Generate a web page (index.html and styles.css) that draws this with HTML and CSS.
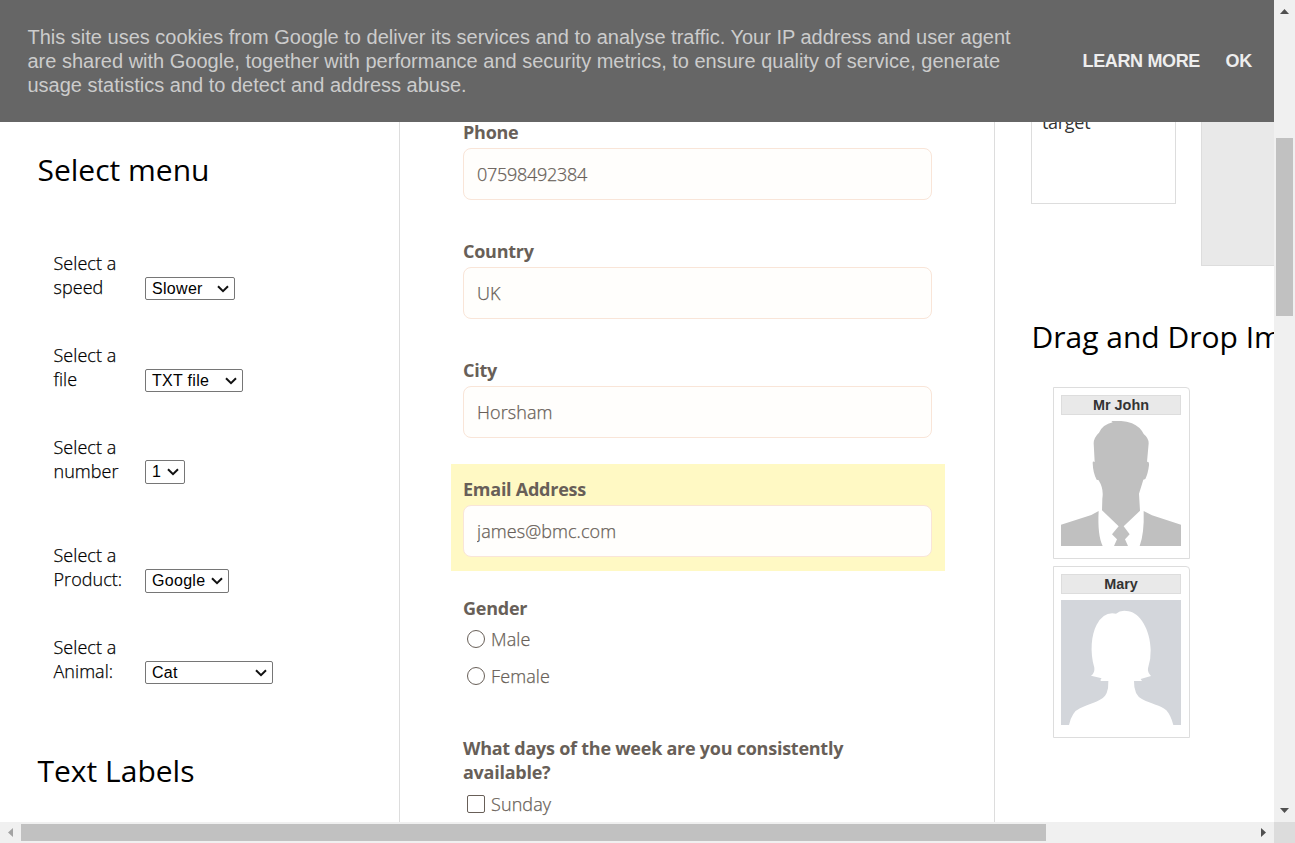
FILE: index.html
```html
<!DOCTYPE html>
<html lang="en">
<head>
<meta charset="utf-8">
<title>Test page</title>
<link rel="stylesheet" href="styles.css">
</head>
<body>
<div class="window">
  <div class="view">
    <header class="cookies">
      <p class="cookies-text">This site uses cookies from Google to deliver its services and to analyse traffic. Your IP address and user agent are shared with Google, together with performance and security metrics, to ensure quality of service, generate usage statistics and to detect and address abuse.</p>
      <a class="cookies-link">LEARN MORE</a>
      <a class="cookies-link">OK</a>
    </header>
    <main class="columns">
      <section class="menus">
        <h2 class="title">Select menu</h2>
        <div class="menu-list">
          <div class="menu-row"><span class="menu-label">Select a speed</span><div class="select w-speed">Slower<svg class="chevron" viewBox="0 0 12 8"><path d="M1 1.300L6 6.200L11 1.300"/></svg></div></div>
          <div class="menu-row"><span class="menu-label">Select a file</span><div class="select w-file">TXT file<svg class="chevron" viewBox="0 0 12 8"><path d="M1 1.300L6 6.200L11 1.300"/></svg></div></div>
          <div class="menu-row menu-row-third"><span class="menu-label">Select a number</span><div class="select select-tall w-number">1<svg class="chevron" viewBox="0 0 12 8"><path d="M1 1.300L6 6.200L11 1.300"/></svg></div></div>
          <div class="menu-row"><span class="menu-label">Select a Product:</span><div class="select select-tall select-low w-product">Google<svg class="chevron" viewBox="0 0 12 8"><path d="M1 1.300L6 6.200L11 1.300"/></svg></div></div>
          <div class="menu-row"><span class="menu-label">Select a Animal:</span><div class="select w-animal">Cat<svg class="chevron" viewBox="0 0 12 8"><path d="M1 1.300L6 6.200L11 1.300"/></svg></div></div>
        </div>
        <h2 class="title">Text Labels</h2>
      </section>
      <section class="form-column">
        <form class="form">
          <div class="field"><label class="field-label">Phone</label><input class="input input-number" value="07598492384"></div>
          <div class="field"><label class="field-label">Country</label><input class="input" value="UK"></div>
          <div class="field"><label class="field-label">City</label><input class="input" value="Horsham"></div>
          <div class="field field-active"><label class="field-label">Email Address</label><input class="input" value="james@bmc.com"></div>
          <div class="field gender">
            <div class="field-label">Gender</div>
            <div class="choice"><span class="mark round"></span>Male</div>
            <div class="choice"><span class="mark round"></span>Female</div>
          </div>
          <div class="field days">
            <div class="field-label">What days of the week are you consistently available?</div>
            <div class="choice"><span class="mark"></span>Sunday</div>
          </div>
        </form>
      </section>
      <section class="drag">
        <div class="drop-row">
          <div class="source">target</div>
          <div class="target"></div>
        </div>
        <h2 class="title drag-title">Drag and Drop Images</h2>
        <div class="cards">
          <article class="card">
            <h5 class="card-name">Mr John</h5>
            <svg class="portrait" viewBox="0 0 360 375">
              <path fill="#c0c0c0" d="M124 233Q129 204 113 178L107 176Q96 156 95 126Q95 119 101 123L98 67Q98 50 114 35Q126 10 155 4L151 0Q184-3 213 7Q237 17 248 39Q263 51 263 67L258 123Q265 119 264 133Q261 158 253 174L247 176L234 218L237 269L188 316L206 340L192 355L201 375H159L168 355L153 340L173 316L123 268Z"/>
              <path fill="#c0c0c0" d="M0 311L91 282L113 270Q109 342 125 375H0ZM360 311L273 283L248 270Q250 338 236 375H360Z"/>
            </svg>
          </article>
          <article class="card">
            <h5 class="card-name">Mary</h5>
            <svg class="portrait" viewBox="0 0 360 375">
              <path fill="#d3d6db" d="M0 0H360V375H0Z"/>
              <path fill="#fff" d="M24 375Q33 335 57 325C94 307 127 303 137 279Q143 264 142 243H119V238L122 235L90 227Q102 218 100 203C86 155 91 104 107 74Q129 33 165 41Q179 29 203 34C236 39 268 88 269 150Q270 177 261 205Q259 217 270 228L239 237L243 243H219Q218 285 244 298C272 313 298 315 316 331Q329 345 337 375Z"/>
            </svg>
          </article>
        </div>
      </section>
    </main>
  </div>
  <div class="vbar">
    <svg class="arrow" viewBox="0 0 21 21"><path fill="#505050" d="M6 14L10.500 9L15 14Z"/></svg>
    <div class="vthumb"></div>
    <svg class="arrow arrow-end" viewBox="0 0 21 21"><path fill="#505050" d="M6 7L10.500 12L15 7Z"/></svg>
  </div>
  <div class="hbar">
    <svg class="arrow" viewBox="0 0 21 21"><path fill="#a3a3a3" d="M13 6L8 10.500L13 15Z"/></svg>
    <div class="hthumb"></div>
    <svg class="arrow arrow-right" viewBox="0 0 21 21"><path fill="#505050" d="M8 6L13 10.500L8 15Z"/></svg>
  </div>
  <div class="corner"></div>
</div>
</body>
</html>
```
FILE: styles.css
```css
* { box-sizing: border-box; }
body { margin: 0; background: #fff; overflow: hidden; font-family: "Open Sans", sans-serif; color: #000; }
.window { display: grid; grid-template: 822px 21px / 1274px 21px; width: 1295px; height: 843px; }
.view { display: flex; flex-direction: column; overflow: hidden; min-width: 0; }

.cookies { display: flex; align-items: center; flex: none; height: 122px; padding: 0 22px 0 27.500px; background: #666; font-family: "Liberation Sans", Arial, sans-serif; }
.cookies-text { width: 1000px; margin: 0 55px 0 0; font-size: 20px; line-height: 24px; color: #ccc; flex: none; }
.cookies-link { font-size: 18px; font-weight: bold; letter-spacing: -0.350px; color: #eee; white-space: nowrap; margin-right: 25.500px; }

.columns { display: grid; grid-template-columns: 400px 595px 279px; height: 700px; overflow: hidden; }
.menus, .form-column { border-right: 1px solid #ddd; min-width: 0; height: 700px; overflow: hidden; }
.title { margin: 0; font-size: 30px; line-height: 40px; font-weight: 400; white-space: nowrap; }
.menus { padding: 28px 0 0 37.500px; }
.menu-list { padding: 61px 0 68px 16px; }
.menu-row { display: flex; align-items: flex-end; height: 48px; margin-bottom: 44px; }
.menu-row-third { margin-bottom: 60px; }
.menu-row:last-child { margin-bottom: 0; }
.menu-label { width: 91.500px; padding-right: 16px; font-size: 18px; line-height: 24px; font-weight: 300; letter-spacing: 0.050px; -webkit-text-stroke: 0.250px currentColor; }
.select { display: flex; align-items: center; justify-content: space-between; height: 23px; margin-bottom: -1px; padding: 0 5px 0 6px; border: 1px solid #767676; border-radius: 2px; background: #fff; font: 16px "Liberation Sans", Arial, sans-serif; letter-spacing: 0.300px; }
.select-tall { height: 24px; }
.select-low { margin-bottom: -2px; }
.chevron { flex: none; width: 12px; height: 8px; fill: none; stroke: #111; stroke-width: 2; }
.w-speed { width: 90px; }
.w-file { width: 98px; }
.w-number { width: 40px; }
.w-product { width: 84px; }
.w-animal { width: 128px; }

.form { margin: -15px 49px 0 51px; font-size: 18px; line-height: 24px; color: #685f58; }
.field { height: 107px; margin-bottom: 12px; padding: 13px 13px 14px 12px; }
.field-active { background: #fff9c4; }
.field-label { display: block; font-weight: 700; letter-spacing: -0.250px; }
.input { display: block; width: 100%; height: 52px; margin-top: 4px; padding: 0 13px; border: 1px solid #f9e5d8; border-radius: 8px; background: #fffefc; color: #685f58; font: 300 18px "Open Sans", sans-serif; letter-spacing: 0.080px; -webkit-text-stroke: 0.250px currentColor; }
.input-number { letter-spacing: -0.280px; }
.gender { height: 128px; }
.days { height: auto; }
.days .field-label { margin-bottom: 1px; }
.choice { display: flex; align-items: center; height: 37px; gap: 6px; padding-left: 4px; font-weight: 300; letter-spacing: 0.100px; -webkit-text-stroke: 0.250px currentColor; }
.mark { width: 18px; height: 18px; border: 1px solid #685f58; border-radius: 2px; }
.round { border-radius: 50%; }

.drag { padding-left: 36px; overflow: hidden; min-width: 0; }
.drop-row { display: flex; align-items: flex-start; gap: 25px; height: 144px; }
.source { flex: none; width: 145px; height: 82px; padding: 0 10px; border: 1px solid #ddd; border-top: 0; font-size: 18px; line-height: 1px; letter-spacing: -0.300px; color: #333; }
.target { flex: none; width: 190px; height: 144px; border: 1px solid #ddd; border-top: 0; background: #e9e9e9; }
.drag-title { margin-top: 51px; padding-left: 0.500px; }
.cards { display: flex; flex-direction: column; gap: 7px; margin: 30px 0 0 22px; }
.card { width: 137px; height: 172px; padding: 7px; border: 1px solid #ddd; border-top-right-radius: 4px; }
.card-name { width: 120px; height: 20px; margin: 0 0 6px; border: 1px solid #ddd; background: #e9e9e9; font: bold 14.400px/18px "Liberation Sans", Arial, sans-serif; color: #333; text-align: center; }
.portrait { display: block; width: 120px; height: 125px; }

.vbar { display: flex; flex-direction: column; align-items: center; background: #f0f0f0; }
.vthumb { width: 17px; height: 178px; margin-top: 117px; background: #c1c1c1; }
.arrow { width: 21px; height: 21px; flex: none; }
.arrow-end { margin-top: auto; }
.hbar { display: flex; align-items: center; background: #f0f0f0; }
.hthumb { width: 1025px; height: 17px; background: #c1c1c1; }
.arrow-right { margin-left: auto; }
.corner { background: #dcdcdc; }
```
